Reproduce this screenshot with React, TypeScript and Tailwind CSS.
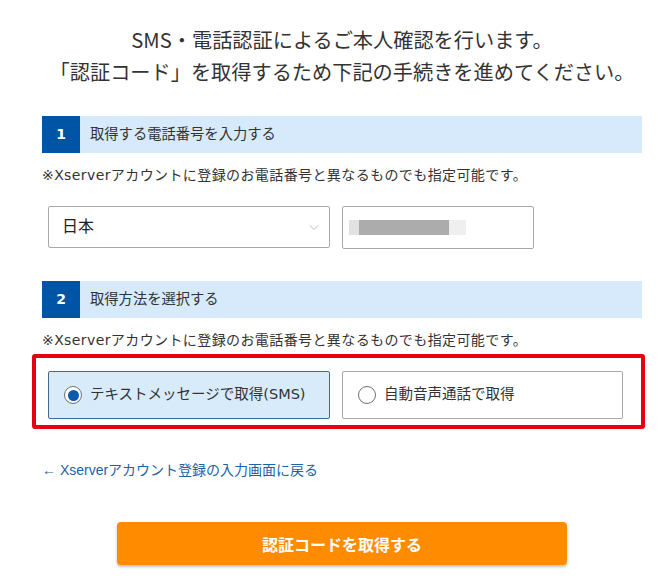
import React, { useState } from 'react';

const font = "font-['DejaVu_Sans','Noto_Sans_CJK_JP',sans-serif]";

const SectionBar: React.FC<{ num: string; label: string }> = ({ num, label }) => (
  <div className="flex h-[37px] items-stretch bg-[#d6eafc]">
    <div className="flex w-[38px] items-center justify-center bg-[#0054a6] text-[14px] font-bold text-white">{num}</div>
    <div className="flex items-center pl-[10px] text-[14.3px] text-[#333]">{label}</div>
  </div>
);

const Note: React.FC = () => (
  <p className="mt-[12px] text-[14px] leading-[20px] text-[#333] tracking-[0.4px]">
    ※Xserverアカウントに登録のお電話番号と異なるものでも指定可能です。
  </p>
);

const App: React.FC = () => {
  const [method, setMethod] = useState<'sms' | 'voice'>('sms');

  return (
    <div className={`min-h-[583px] w-[668px] bg-white ${font}`}>
      <div className="ml-[42px] w-[600px] pt-[24px]">
        {/* Title */}
        <h1 className="text-center text-[20.2px] leading-[32px] font-normal text-[#333] font-['Noto_Sans_CJK_JP',sans-serif]">
          SMS・電話認証によるご本人確認を行います。<br />
          「認証コード」を取得するため下記の手続きを進めてください。
        </h1>

        {/* Step 1 */}
        <div className="mt-[28px]">
          <SectionBar num="1" label="取得する電話番号を入力する" />
          <Note />
          <div className="mt-[21px] flex gap-[12px] pl-[6px]">
            <div className="relative flex h-[42px] w-[282px] items-center rounded-[2px] border border-[#a9a9a9] pl-[13px] text-[16px] text-[#222]">
              日本
              <svg className="absolute right-[10px] top-[17px]" width="10" height="7" viewBox="0 0 10 7">
                <path d="M1 1.5 L5 5.5 L9 1.5" fill="none" stroke="#bbb" strokeWidth="1" />
              </svg>
            </div>
            <div className="flex h-[43px] w-[192px] items-center rounded-[2px] border border-[#a9a9a9] pl-[6px]">
              <div className="flex h-[15px] blur-[0.5px]">
                <div className="w-[10px] bg-[#e2e2e2]" />
                <div className="w-[90px] bg-[#acacac]" />
                <div className="w-[17px] bg-[#efefef]" />
              </div>
            </div>
          </div>
        </div>

        {/* Step 2 */}
        <div className="mt-[32px]">
          <SectionBar num="2" label="取得方法を選択する" />
          <Note />
          <div className="-ml-[10px] -mr-[3px] mt-[4px] rounded-[3px] border-4 border-[#e8000f] pb-[6px] pl-[12px] pr-[12px] pt-[13px]">
            <div className="flex gap-[12px]">
              <button
                onClick={() => setMethod('sms')}
                className={`flex h-[48px] w-[282px] items-center gap-[8px] rounded-[2px] border pl-[15px] text-[14.5px] text-[#333] ${
                  method === 'sms' ? 'border-[#3b6c98] bg-[#d7ebfb]' : 'border-[#a9a9a9] bg-white'
                }`}
              >
                <span className="flex h-[18px] w-[18px] items-center justify-center rounded-full border border-[#6f6f6f] bg-white">
                  {method === 'sms' && <span className="h-[11px] w-[11px] rounded-full bg-[#0a5bb0]" />}
                </span>
                テキストメッセージで取得(SMS)
              </button>
              <button
                onClick={() => setMethod('voice')}
                className={`flex h-[48px] w-[281px] items-center gap-[8px] rounded-[2px] border pl-[15px] text-[14.5px] text-[#333] ${
                  method === 'voice' ? 'border-[#3b6c98] bg-[#d7ebfb]' : 'border-[#a9a9a9] bg-white'
                }`}
              >
                <span className="flex h-[18px] w-[18px] items-center justify-center rounded-full border border-[#6f6f6f] bg-white">
                  {method === 'voice' && <span className="h-[11px] w-[11px] rounded-full bg-[#0a5bb0]" />}
                </span>
                自動音声通話で取得
              </button>
            </div>
          </div>
        </div>

        {/* Back link */}
        <a href="#" className="mt-[31px] block text-[14px] leading-[20px] text-[#1e62a6] font-['Liberation_Sans','Noto_Sans_CJK_JP',sans-serif]">
          ← Xserverアカウント登録の入力画面に戻る
        </a>

        {/* Submit */}
        <div className="mt-[42px] pl-[75px]">
          <button className="flex h-[43px] w-[450px] items-center justify-center rounded-[4px] bg-[#ff8c00] text-[16px] font-bold text-white shadow-[0_2px_3px_rgba(0,0,0,0.25)] font-['Noto_Sans_CJK_JP',sans-serif]">
            認証コードを取得する
          </button>
        </div>
      </div>
    </div>
  );
};

export default App;
